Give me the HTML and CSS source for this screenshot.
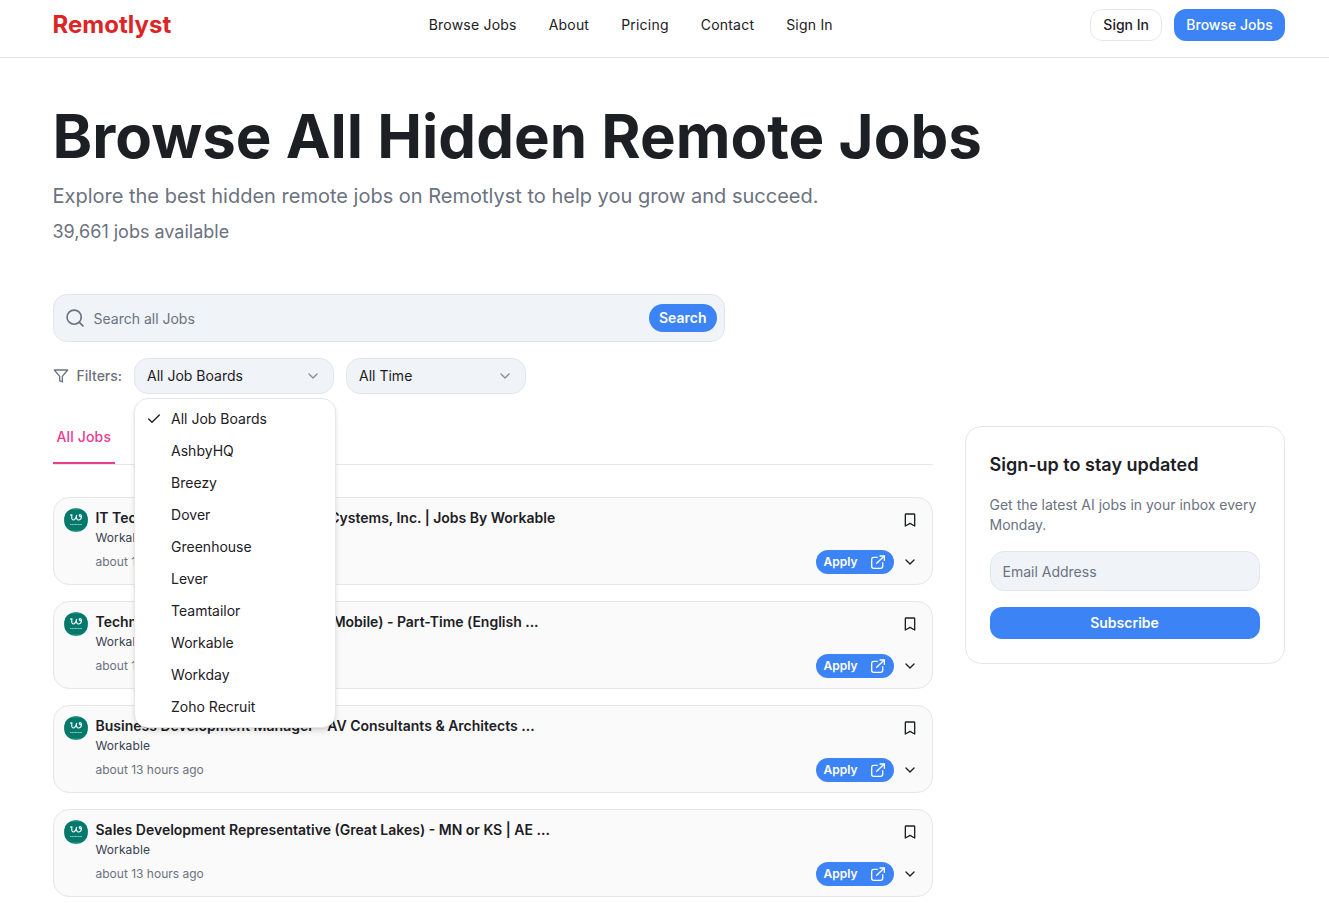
FILE: index.html
```html
<!DOCTYPE html>
<html lang="en">
<head>
<meta charset="utf-8">
<title>Remotlyst - Browse All Hidden Remote Jobs</title>
<link rel="stylesheet" href="styles.css">
</head>
<body>
<svg class="defs" aria-hidden="true">
  <symbol id="down" viewBox="0 0 24 24"><path d="m6 9 6 6 6-6"/></symbol>
  <symbol id="bookmark" viewBox="0 0 24 24"><path d="m19 21-7-4-7 4V4a1 1 0 0 1 1-1h12a1 1 0 0 1 1 1v17z"/></symbol>
  <symbol id="external" viewBox="0 0 24 24"><path d="M15 3h6.500v6.500"/><path d="M10 14 21.500 3"/><path d="M11 5H5.500a3 3 0 0 0-3 3v10.500a3 3 0 0 0 3 3H16a3 3 0 0 0 3-3v-5.500"/></symbol>
  <symbol id="workable" viewBox="0 0 24 24"><rect width="24" height="24" fill="#2c9c83"/><rect x="0.500" y="1.500" width="23" height="21" rx="6" fill="#04786a"/><path d="M6.500 7.200 8 6.800C7.300 9.500 7.800 12 9.300 12c1.600 0 2.700-2.200 3.200-4.600C12.200 10 12.800 12 14.400 12c1.700 0 3-1.600 3.100-3.200M17.500 8.800c.1-2.600-2.400-2.700-2.200-1.200.1.900 1.100 1.300 2.200 1.200" fill="none" stroke="#e5f5f1" stroke-width="1.200" stroke-linecap="round" stroke-linejoin="round"/><path d="M6 16.500h12" stroke="#8fc6bb" stroke-width="1.200" stroke-dasharray="1.300 .3"/></symbol>
</svg>
<header class="header">
  <div class="wrap header-row">
    <a class="logo">Remotlyst</a>
    <nav class="nav"><a>Browse Jobs</a><a>About</a><a>Pricing</a><a>Contact</a><a>Sign In</a></nav>
    <div class="actions"><a class="btn outline">Sign In</a><a class="btn primary">Browse Jobs</a></div>
  </div>
</header>
<main class="wrap">
  <h1>Browse All Hidden Remote Jobs</h1>
  <p class="lead">Explore the best hidden remote jobs on Remotlyst to help you grow and succeed.</p>
  <p class="count">39,661 jobs available</p>
  <div class="search">
    <svg class="icon search-icon" viewBox="0 0 24 24"><circle cx="11" cy="11" r="8.500"/><path d="m21.500 21.500-4.500-4.500"/></svg>
    <span class="placeholder">Search all Jobs</span>
    <a class="search-btn">Search</a>
  </div>
  <div class="filters">
    <span class="filter-label"><svg class="icon" viewBox="0 0 24 24"><path d="M22 3H2l8 9.460V19l4 2v-8.540L22 3z"/></svg>Filters:</span>
    <div class="select boards">All Job Boards<svg class="icon"><use href="#down"/></svg>
      <ul class="menu">
        <li><svg class="icon check" viewBox="0 0 24 24"><path d="M20 6 9 17l-5-5"/></svg>All Job Boards</li>
        <li>AshbyHQ</li><li>Breezy</li><li>Dover</li><li>Greenhouse</li><li>Lever</li><li>Teamtailor</li><li>Workable</li><li>Workday</li><li>Zoho Recruit</li>
      </ul>
    </div>
    <div class="select time">All Time<svg class="icon"><use href="#down"/></svg></div>
  </div>
  <div class="columns">
    <section class="list">
      <div class="tabs"><a class="tab">All Jobs</a></div>
      <article class="job">
        <svg class="avatar"><use href="#workable"/></svg>
        <div class="info"><h2 class="snug">IT Technical Support Specialist II - Cystems, Inc. | Jobs By Workable</h2><p class="source">Workable</p><p class="age">about 13 hours ago</p></div>
        <div class="tools"><svg class="icon mark"><use href="#bookmark"/></svg><div class="row"><a class="apply">Apply<svg class="icon"><use href="#external"/></svg></a><svg class="icon more"><use href="#down"/></svg></div></div>
      </article>
      <article class="job">
        <svg class="avatar"><use href="#workable"/></svg>
        <div class="info"><h2 class="snug">Technical Support Representative (Mobile) - Part-Time (English ...</h2><p class="source">Workable</p><p class="age">about 13 hours ago</p></div>
        <div class="tools"><svg class="icon mark"><use href="#bookmark"/></svg><div class="row"><a class="apply">Apply<svg class="icon"><use href="#external"/></svg></a><svg class="icon more"><use href="#down"/></svg></div></div>
      </article>
      <article class="job">
        <svg class="avatar"><use href="#workable"/></svg>
        <div class="info"><h2>Business Development Manager - AV Consultants &amp; Architects ...</h2><p class="source">Workable</p><p class="age">about 13 hours ago</p></div>
        <div class="tools"><svg class="icon mark"><use href="#bookmark"/></svg><div class="row"><a class="apply">Apply<svg class="icon"><use href="#external"/></svg></a><svg class="icon more"><use href="#down"/></svg></div></div>
      </article>
      <article class="job">
        <svg class="avatar"><use href="#workable"/></svg>
        <div class="info"><h2>Sales Development Representative (Great Lakes) - MN or KS | AE ...</h2><p class="source">Workable</p><p class="age">about 13 hours ago</p></div>
        <div class="tools"><svg class="icon mark"><use href="#bookmark"/></svg><div class="row"><a class="apply">Apply<svg class="icon"><use href="#external"/></svg></a><svg class="icon more"><use href="#down"/></svg></div></div>
      </article>
    </section>
    <aside class="signup">
      <h3>Sign-up to stay updated</h3>
      <p>Get the latest AI jobs in your inbox every Monday.</p>
      <div class="email">Email Address</div>
      <a class="btn primary">Subscribe</a>
    </aside>
  </div>
</main>
</body>
</html>
```
FILE: styles.css
```css
* { box-sizing: border-box; margin: 0; padding: 0; }
html { overflow: hidden; }
body { height: 903px; overflow: hidden; background: #fff; color: #1c2024; font: 14px/20px Inter, sans-serif; }
.defs { position: absolute; width: 0; height: 0; }
.icon { width: 16px; height: 16px; flex: none; fill: none; stroke: currentColor; stroke-width: 2; stroke-linecap: round; stroke-linejoin: round; }
.wrap { width: 1232px; margin-left: 52.5px; }
.header { height: 58px; border-bottom: 1px solid #e5e7eb; }
.header-row { display: flex; justify-content: space-between; align-items: center; width: 1232.5px; height: 50px; }
.logo { color: #dc2626; font-size: 24px; line-height: 32px; font-weight: 700; }
.nav { display: flex; gap: 32px; letter-spacing: 0.21px; }
.actions { display: flex; gap: 12px; }
.btn { display: flex; align-items: center; justify-content: center; height: 32px; padding: 0 12px; border-radius: 12px; font-weight: 500; }
.outline { border: 1px solid #e5e7eb; }
.primary { background: #3c83f6; color: #fff; }
.actions .primary { width: 111px; }
.signup .btn { font-weight: 600; }
h1 { margin-top: 48px; font-size: 60px; line-height: 60px; font-weight: 700; }
.lead { margin-top: 16px; color: #6b7280; font-size: 20px; line-height: 28px; }
.count { margin-top: 8px; color: #6b7280; font-size: 18px; line-height: 28px; }
.search { display: flex; align-items: center; width: 672px; height: 48px; margin-top: 48px; padding: 0 7px 0 11px; border: 1px solid #e2e5eb; border-radius: 14px; background: #f0f4f9; color: #6b7280; }
.search-icon { width: 20px; height: 20px; margin-right: 9px; }
.placeholder { padding-top: 2px; }
.search-btn { height: 28px; margin-left: auto; padding: 4px 10px; border-radius: 14px; background: #3c83f6; color: #fff; font-weight: 600; }
.filters { display: flex; align-items: center; gap: 12px; margin-top: 16px; }
.filter-label { display: flex; align-items: center; gap: 8px; color: #6b7280; font-weight: 500; }
.select { position: relative; display: flex; align-items: center; justify-content: space-between; height: 36px; padding: 0 12px; border: 1px solid #e2e5eb; border-radius: 14px; background: #f0f4f9; }
.select > .icon { color: #888d95; }
.boards { width: 200px; }
.time { width: 180px; }
.menu { position: absolute; z-index: 2; top: 39px; left: -1px; width: 202px; padding: 4px; border: 1px solid #e5e7eb; border-radius: 14px; background: #fff; box-shadow: 0 4px 6px -1px rgba(0,0,0,.12), 0 2px 4px -2px rgba(0,0,0,.12); list-style: none; }
.menu li { position: relative; height: 32px; padding: 6px 8px 6px 32px; }
.check { position: absolute; left: 7px; top: 8px; }
.columns { display: grid; grid-template-columns: 880px 320px; gap: 32px; align-items: start; margin-top: 16px; }
.tabs { display: flex; height: 55px; margin-bottom: 32px; border-bottom: 1px solid #e5e7eb; }
.tab { height: 54px; padding: 17px 4px 0; border-bottom: 2px solid #e93d8f; color: #e93d8f; font-weight: 500; letter-spacing: 0.15px; }
.job { display: flex; height: 88px; margin-bottom: 16px; padding: 10px; border: 1px solid #e5e7eb; border-radius: 16px; background: #fafafa; }
.avatar { width: 24px; height: 24px; border-radius: 50%; flex: none; margin-right: 8px; }
.info { flex: 1; }
.job h2 { font-size: 14px; line-height: 20px; font-weight: 600; }
.job .snug { letter-spacing: -0.015px; }
.source { font-size: 12px; line-height: 20px; color: #374151; letter-spacing: 0.1px; }
.age { margin-top: 4px; font-size: 12px; line-height: 20px; color: #6b7280; }
.tools { display: flex; flex-direction: column; align-items: flex-end; justify-content: space-between; }
.mark { margin: 4px; }
.row { display: flex; align-items: center; }
.apply { display: flex; align-items: center; justify-content: space-between; width: 78px; height: 24px; padding: 0 8px; border-radius: 12px; background: #3c83f6; color: #fff; font-size: 12px; font-weight: 600; }
.more { margin: 0 4px 0 8px; }
.signup { height: 238px; padding: 24px; border: 1px solid #e5e7eb; border-radius: 16px; margin-top: 16px; }
h3 { font-size: 18px; line-height: 28px; font-weight: 600; }
.signup p { margin: 16px 0; color: #6b7280; }
.email { height: 40px; margin-bottom: 16px; padding: 10px 12px; border: 1px solid #e2e5eb; border-radius: 14px; background: #f0f4f9; color: #6b7280; }
```
